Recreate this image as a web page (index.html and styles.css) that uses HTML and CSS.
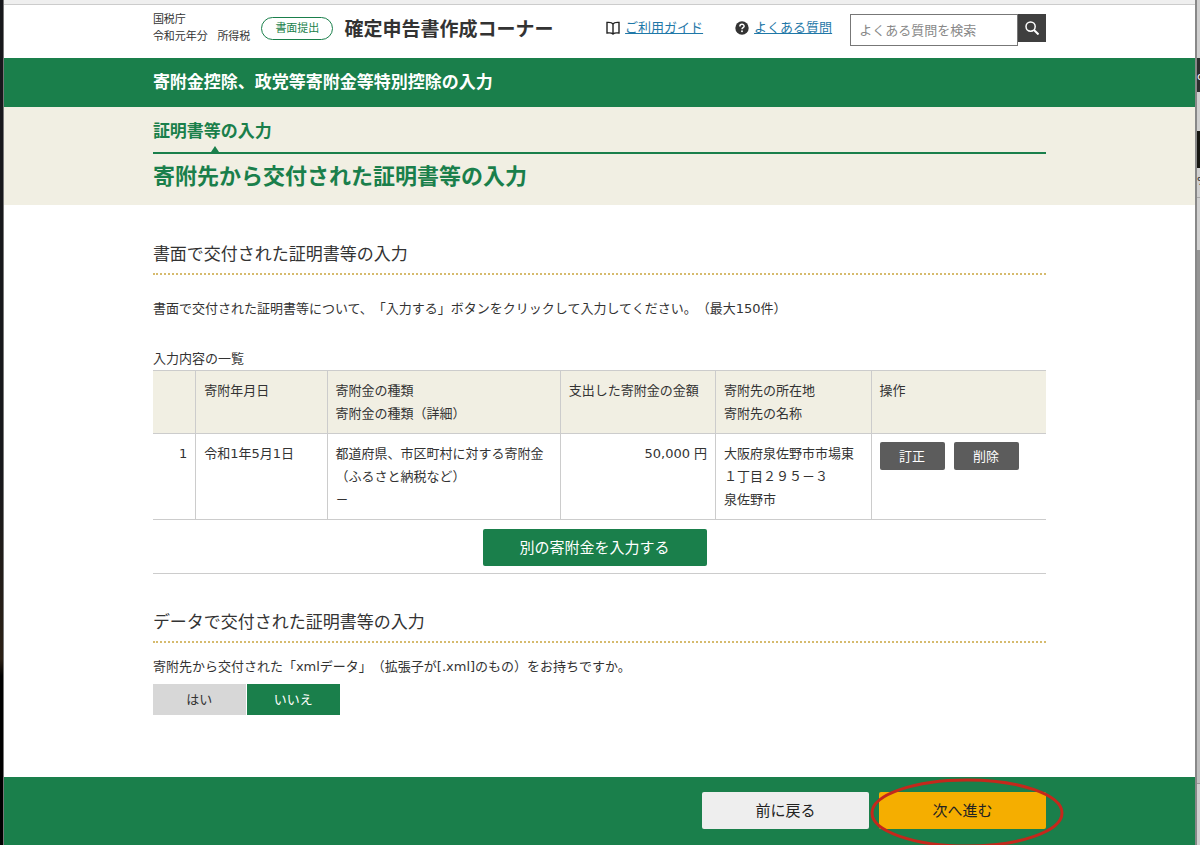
FILE: index.html
```html
<!DOCTYPE html>
<html lang="ja">
<head>
    <meta charset="UTF-8">
    <meta name="viewport" content="width=device-width, initial-scale=1.0">
    <title>確定申告書作成コーナー</title>
    <link rel="stylesheet" href="styles.css">
</head>
<body>

    <div class="desktop-left"></div>

    <div class="page">
        <div class="window-edge"></div>

        <header class="header">
            <div class="inner header-inner">
                <p class="agency">国税庁<br>令和元年分 <span class="tax">所得税</span></p>
                <span class="badge">書面提出</span>
                <h1 class="site-title">確定申告書作成コーナー</h1>
                <nav class="help">
                    <a href="#guide" class="help-link">
                        <svg class="icon" viewBox="0 0 14 14" fill="none" stroke="#222" stroke-width="1.4">
                            <path d="M7 3C6 1.600 3 1.300 1 1.500v10.500c2-.2 5 0 6 1 1-1 4-1.200 6-1V1.500C11 1.300 8 1.600 7 3v10"/>
                        </svg>
                        <span>ご利用ガイド</span>
                    </a>
                    <a href="#faq" class="help-link">
                        <svg class="icon" viewBox="0 0 14 14">
                            <circle cx="7" cy="7" r="6.7" fill="#333"/>
                            <path d="M4.9 5.4c0-2.8 4.2-2.7 4.2-.2C9.1 6.7 7 6.7 7 8.3" fill="none" stroke="#fff" stroke-width="1.5"/>
                            <circle cx="7" cy="10.3" r=".95" fill="#fff"/>
                        </svg>
                        <span>よくある質問</span>
                    </a>
                </nav>
                <form class="search">
                    <input type="text" class="search-input" placeholder="よくある質問を検索" aria-label="よくある質問を検索">
                    <button type="button" class="search-button" aria-label="検索">
                        <svg class="icon" viewBox="0 0 14 14" fill="none" stroke="#fff" stroke-width="1.5">
                            <circle cx="5.6" cy="5.6" r="4.6"/>
                            <path d="M9 9l4.5 4.5" stroke-width="2"/>
                        </svg>
                    </button>
                </form>
            </div>
        </header>

        <div class="title-bar">
            <h2 class="inner title-text">寄附金控除、政党等寄附金等特別控除の入力</h2>
        </div>

        <div class="step-area">
            <div class="inner">
                <p class="step">証明書等の入力</p>
                <h2 class="step-title">寄附先から交付された証明書等の入力</h2>
            </div>
        </div>

        <main class="inner main">
            <section>
                <h3 class="section-title">書面で交付された証明書等の入力</h3>
                <p class="lead">書面で交付された証明書等について、「入力する」ボタンをクリックして入力してください。（最大150件）</p>

                <table class="list">
                    <caption>入力内容の一覧</caption>
                    <colgroup>
                        <col class="col-no">
                        <col class="col-date">
                        <col class="col-kind">
                        <col class="col-amount">
                        <col class="col-place">
                        <col>
                    </colgroup>
                    <thead>
                        <tr>
                            <th></th>
                            <th>寄附年月日</th>
                            <th>寄附金の種類<br>寄附金の種類（詳細）</th>
                            <th>支出した寄附金の金額</th>
                            <th>寄附先の所在地<br>寄附先の名称</th>
                            <th>操作</th>
                        </tr>
                    </thead>
                    <tbody>
                        <tr>
                            <td class="num">1</td>
                            <td>令和1年5月1日</td>
                            <td>都道府県、市区町村に対する寄附金<br>（ふるさと納税など）<br>－</td>
                            <td class="num">50,000 円</td>
                            <td>大阪府泉佐野市市場東<br>１丁目２９５－３<br>泉佐野市</td>
                            <td>
                                <div class="actions">
                                    <button type="button" class="small-button">訂正</button>
                                    <button type="button" class="small-button">削除</button>
                                </div>
                            </td>
                        </tr>
                    </tbody>
                </table>
                <div class="add-row">
                    <button type="button" class="add-button">別の寄附金を入力する</button>
                </div>
            </section>

            <section class="data-section">
                <h3 class="section-title">データで交付された証明書等の入力</h3>
                <fieldset class="choice">
                    <legend>寄附先から交付された「xmlデータ」（拡張子が[.xml]のもの）をお持ちですか。</legend>
                    <div class="choice-row">
                        <input type="radio" name="xml" id="xmlYes">
                        <label for="xmlYes">はい</label>
                        <input type="radio" name="xml" id="xmlNo" checked>
                        <label for="xmlNo">いいえ</label>
                    </div>
                </fieldset>
            </section>
        </main>

        <footer class="footer">
            <div class="inner footer-inner">
                <button type="button" class="nav-button">前に戻る</button>
                <div class="next">
                    <button type="button" class="nav-button next-button">次へ進む</button>
                    <svg class="marker" viewBox="0 0 194 68" fill="none" stroke="#c4281c" stroke-width="3">
                        <ellipse cx="97" cy="35" rx="95" ry="33"/>
                    </svg>
                </div>
            </div>
        </footer>
    </div>

    <!-- window behind, only its edge is visible -->
    <div class="desktop-right">
        <div class="edge edge-top"></div>
        <div class="edge edge-tab">c</div>
        <div class="edge edge-gap"></div>
        <div class="edge edge-black"></div>
        <div class="edge edge-zoom">%</div>
        <div class="edge edge-tools"></div>
        <div class="edge edge-thumb"></div>
        <div class="edge edge-track"></div>
        <div class="edge edge-status"></div>
    </div>

</body>
</html>
```
FILE: styles.css
```css
* {
    box-sizing: border-box;
}
body {
    margin: 0;
    min-height: 100vh;
    display: flex;
    font-family: "DejaVu Sans", "Noto Sans CJK JP", sans-serif;
    font-size: 13px;
    line-height: 23px;
    text-spacing-trim: space-all;
    color: #333;
    background-color: #fff;
}
h1, h2, h3, p {
    margin: 0;
}
button, input {
    font-family: inherit;
    font-size: inherit;
}
button {
    padding: 0 0 2px;
    border: none;
    border-radius: 2px;
    cursor: pointer;
}
.desktop-left {
    width: 4px;
    background: linear-gradient(#17181c 55%, #2b2015 78%, #000 80%);
    border-right: 1px solid #777;
}
.page {
    flex: 1;
    min-width: 0;
    display: flex;
    flex-direction: column;
}
.inner {
    width: 75%;
    margin: 0 auto;
}
.icon {
    display: block;
    width: 14px;
    height: 14px;
}

/* header */
.window-edge {
    height: 5px;
    background-color: #efefef;
    border-bottom: 1px solid #ccc;
}
.header-inner {
    display: flex;
    align-items: flex-start;
    height: 53px;
    padding-top: 6px;
}
.agency {
    font-size: 11px;
    line-height: 17px;
    white-space: nowrap;
}
.tax {
    margin-left: 6px;
}
.badge {
    margin: 6px 11px 0;
    padding: 0 13px;
    border: 1px solid #1a7f4b;
    border-radius: 12px;
    font-size: 11px;
    line-height: 21px;
    color: #1a7f4b;
    white-space: nowrap;
}
.site-title {
    font-size: 19px;
    line-height: 36px;
    white-space: nowrap;
}
.help {
    display: flex;
    gap: 32px;
    margin: 5px 18px 0 auto;
}
.help-link {
    display: flex;
    align-items: center;
    gap: 5px;
    color: #1f78a8;
    white-space: nowrap;
    text-decoration: none;
}
.help-link span {
    text-decoration: underline;
}
.search {
    display: flex;
    align-items: flex-start;
    margin-top: 3px;
}
.search-input {
    width: 168px;
    height: 32px;
    padding: 0 8px;
    border: 1px solid #777;
}
.search-input::placeholder {
    color: #888;
}
.search-button {
    width: 28px;
    height: 28px;
    padding: 0 7px;
    border-radius: 0;
    background-color: #3f3f3f;
}

/* titles */
.title-bar {
    background-color: #1a7f4b;
    color: #fff;
}
.title-text {
    font-size: 17px;
    line-height: 49px;
}
.step-area {
    padding: 10px 0 12px;
    background-color: #f1efe3;
    color: #1a7f4b;
}
.step {
    position: relative;
    padding-bottom: 6px;
    border-bottom: 2px solid #1a7f4b;
    font-size: 17px;
    line-height: 29px;
    font-weight: bold;
}
.step::after {
    content: "";
    position: absolute;
    left: 58px;
    bottom: 0;
    border: 4px solid transparent;
    border-top-width: 0;
    border-bottom: 6px solid #1a7f4b;
}
.step-title {
    padding-top: 7px;
    font-size: 22px;
    line-height: 32px;
}

/* main */
.main {
    flex: 1 0 auto;
    padding: 35px 0 61px;
}
.section-title {
    padding-bottom: 4px;
    border-bottom: 2px dotted #d6bb6e;
    font-size: 17px;
    line-height: 29px;
    font-weight: normal;
}
.lead {
    padding: 22px 0 27px;
}
.list {
    width: 100%;
    table-layout: fixed;
    border-collapse: collapse;
}
.list caption {
    text-align: left;
}
.list th, .list td {
    padding: 8px;
    border: 1px solid #ccc;
    font-weight: normal;
    text-align: left;
    vertical-align: top;
}
.list th {
    background-color: #f1efe3;
}
.list tr > :first-child {
    border-left: none;
}
.list tr > :last-child {
    border-right: none;
}
.list .num {
    text-align: right;
}
.col-no {
    width: 4.8%;
}
.col-date {
    width: 14.7%;
}
.col-kind {
    width: 26.1%;
}
.col-amount, .col-place {
    width: 17.4%;
}
.actions {
    display: flex;
    gap: 9px;
}
.small-button {
    width: 65px;
    height: 28px;
    background-color: #5c5c5c;
    color: #fff;
}
.add-row {
    display: flex;
    justify-content: center;
    padding: 9px 10px 7px 0;
    border-bottom: 1px solid #ccc;
}
.add-button {
    width: 224px;
    height: 37px;
    background-color: #1a7f4b;
    font-size: 15px;
    color: #fff;
}
.data-section {
    padding-top: 34px;
}
.choice {
    margin: 0;
    padding: 12px 0 0;
    border: none;
}
.choice legend {
    float: left;
    width: 100%;
    padding: 0 0 6px;
}
.choice-row {
    clear: both;
    display: flex;
    gap: 1px;
}
.choice input {
    position: absolute;
    opacity: 0;
}
.choice label {
    width: 93px;
    background-color: #d7d7d7;
    line-height: 31px;
    text-align: center;
    cursor: pointer;
}
.choice input:checked + label {
    background-color: #1a7f4b;
    color: #fff;
}

/* footer */
.footer {
    padding: 15px 0 16px;
    background-color: #1a7f4b;
}
.footer-inner {
    display: flex;
    justify-content: flex-end;
    gap: 10px;
}
.nav-button {
    width: 167px;
    height: 37px;
    background-color: #eee;
    font-size: 15px;
    color: #222;
}
.next {
    position: relative;
}
.next-button {
    background-color: #f5ae00;
}
.marker {
    position: absolute;
    left: -9px;
    top: -14px;
    width: 194px;
    height: 68px;
    pointer-events: none;
}

/* right edge */
.desktop-right {
    display: flex;
    flex-direction: column;
    width: 5px;
    border-left: 2px solid #888;
    overflow: hidden;
    font-size: 11px;
    color: #222;
}
.edge {
    overflow: hidden;
    background-color: #d0d0d0;
}
.edge-top {
    height: 58px;
}
.edge-tab {
    height: 34px;
    line-height: 38px;
    background-color: #2e2e2e;
    color: #fff;
}
.edge-gap {
    height: 39px;
}
.edge-black {
    height: 37px;
    background-color: #161612;
}
.edge-zoom {
    height: 30px;
    line-height: 28px;
    border-bottom: 1px solid #aaa;
}
.edge-tools {
    height: 52px;
}
.edge-thumb {
    height: 150px;
    background-color: #959595;
}
.edge-track {
    flex: 1;
    background-color: #bfbfbf;
}
.edge-status {
    height: 62px;
    border-top: 1px solid #999;
}
```
